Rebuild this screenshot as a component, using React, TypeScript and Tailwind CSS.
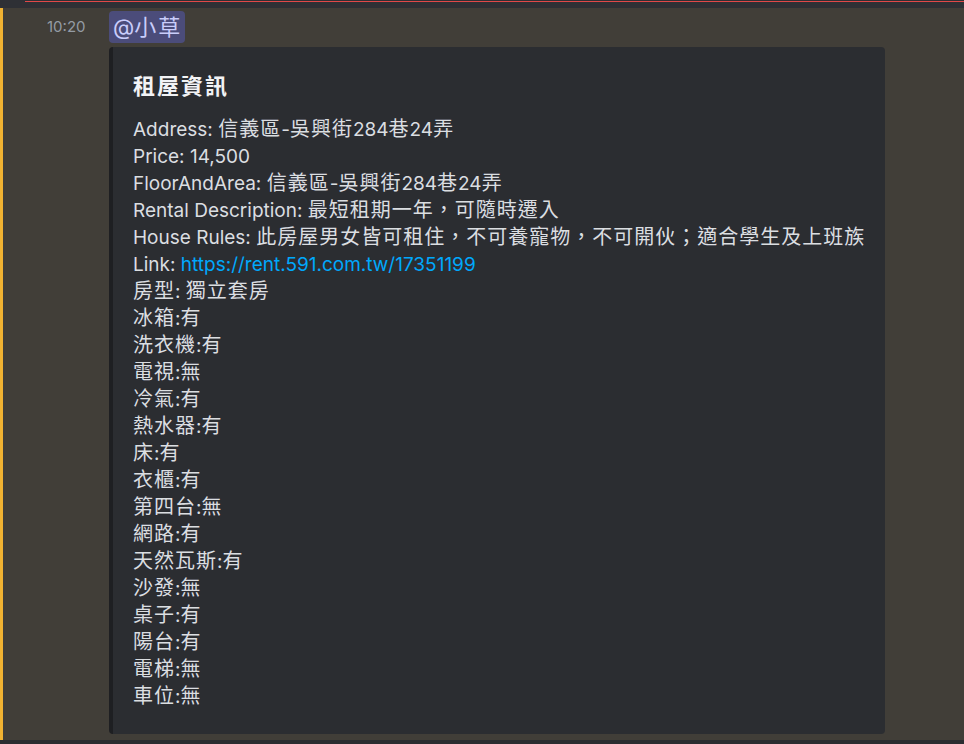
import React from "react";

const lines: { k: string; v: string; link?: boolean }[] = [
  { k: "Address: ", v: "信義區-吳興街284巷24弄" },
  { k: "Price: ", v: "14,500" },
  { k: "FloorAndArea: ", v: "信義區-吳興街284巷24弄" },
  { k: "Rental Description: ", v: "最短租期一年，可隨時遷入" },
  { k: "House Rules: ", v: "此房屋男女皆可租住，不可養寵物，不可開伙；適合學生及上班族" },
  { k: "Link: ", v: "https://rent.591.com.tw/17351199", link: true },
  { k: "房型: ", v: "獨立套房" },
  { k: "冰箱:", v: "有" },
  { k: "洗衣機:", v: "有" },
  { k: "電視:", v: "無" },
  { k: "冷氣:", v: "有" },
  { k: "熱水器:", v: "有" },
  { k: "床:", v: "有" },
  { k: "衣櫃:", v: "有" },
  { k: "第四台:", v: "無" },
  { k: "網路:", v: "有" },
  { k: "天然瓦斯:", v: "有" },
  { k: "沙發:", v: "無" },
  { k: "桌子:", v: "有" },
  { k: "陽台:", v: "有" },
  { k: "電梯:", v: "無" },
  { k: "車位:", v: "無" },
];

function Mixed({ text, cjk }: { text: string; cjk: string }) {
  const parts = text.split(/([\u3000-\u9fff\uff00-\uffef]+)/);
  return (
    <>
      {parts.map((p, i) =>
        i % 2 === 1 ? (
          <span key={i} className={cjk}>
            {p}
          </span>
        ) : (
          <React.Fragment key={i}>{p}</React.Fragment>
        )
      )}
    </>
  );
}

export default function App() {
  const bodyCjk = "text-[20px] tracking-[1px] leading-[27px]";
  return (
    <div
      className="w-[964px] h-[744px] overflow-hidden bg-[#2b2d31] flex flex-col"
      style={{ fontFamily: 'Inter, "Noto Sans CJK TC", sans-serif' }}
    >
      <div className="h-[8px] shrink-0 bg-[#2e3035] pt-[1px] pl-[25px]">
        <div className="h-[1px] bg-[#e04848]" />
      </div>
      <div className="h-[732px] shrink-0 bg-[#413e38] border-l-[3px] border-[#f0b232] flex">
        <div className="w-[106px] shrink-0 pl-[44px] pt-[2px]">
          <span className="text-[15px] leading-[34px] text-[#949ba4]">10:20</span>
        </div>
        <div className="flex flex-col pt-[3px]">
          <div className="h-[32px]">
            <span className="inline-block bg-[#4b4c7a] text-[#c9cdfb] text-[22px] leading-[32px] pl-[4px] pr-[3px] rounded-[4px]">
              @<span className="tracking-[2px]">小草</span>
            </span>
          </div>
          <div className="mt-[4px] w-[776px] h-[687px] bg-[#2b2d31] border-l-[4px] border-[#1e1f22] rounded-[4px] pl-[20px] pt-[24px]">
            <div className="text-[22px] leading-[30px] font-bold tracking-[2px] text-[#f2f3f5]">租屋資訊</div>
            <div className="mt-[15px] text-[19px] leading-[27px] text-[#dbdee1]">
              {lines.map((l, i) => (
                <div key={i} className="h-[27px] whitespace-nowrap">
                  <Mixed text={l.k} cjk={bodyCjk} />
                  {l.link ? (
                    <span className="text-[#00a8fc]">{l.v}</span>
                  ) : (
                    <Mixed text={l.v} cjk={bodyCjk} />
                  )}
                </div>
              ))}
            </div>
          </div>
        </div>
      </div>
    </div>
  );
}
